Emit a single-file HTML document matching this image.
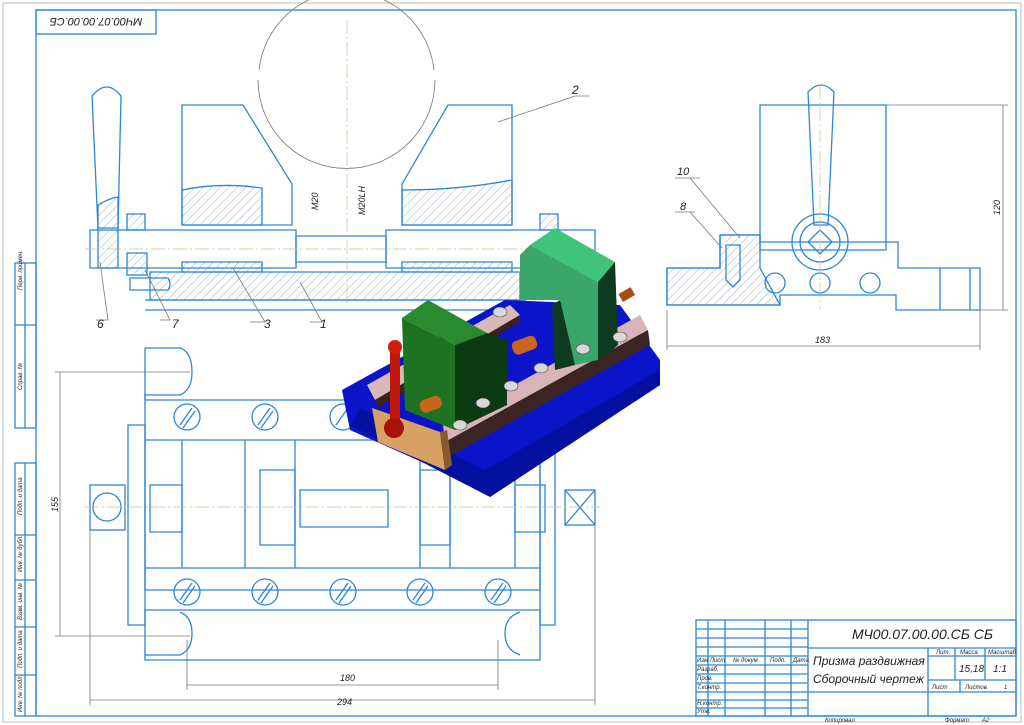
<!DOCTYPE html>
<html><head><meta charset="utf-8"><style>
html,body{margin:0;padding:0;background:#fff;}
svg{display:block;}
text{font-family:"Liberation Sans","DejaVu Sans",sans-serif;font-style:italic;fill:#222;}
</style></head><body>
<svg width="1024" height="725" viewBox="0 0 1024 725" xmlns="http://www.w3.org/2000/svg">
<defs>
<pattern id="h" width="6" height="6" patternUnits="userSpaceOnUse" patternTransform="rotate(45)">
<line x1="0" y1="0" x2="0" y2="6" stroke="#8a9bb0" stroke-width="0.8"/></pattern>
</defs>
<rect x="3" y="3" width="1018" height="719" fill="#fff" stroke="#bbb"/>
<g fill="none" stroke="#2b86d6" stroke-width="1.3">
<rect x="36" y="10" width="980" height="706"/>
<rect x="36" y="10" width="120" height="24"/>
<rect x="15" y="263" width="21" height="165"/><line x1="15" y1="325" x2="36" y2="325"/><line x1="25" y1="263" x2="25" y2="428"/>
<rect x="15" y="463" width="21" height="253"/><line x1="25" y1="463" x2="25" y2="716"/>
<line x1="15" y1="535" x2="36" y2="535"/><line x1="15" y1="580" x2="36" y2="580"/><line x1="15" y1="627" x2="36" y2="627"/><line x1="15" y1="675" x2="36" y2="675"/>
<rect x="696" y="620" width="320" height="96"/>
<line x1="808" y1="620" x2="808" y2="716"/><line x1="808" y1="648" x2="1016" y2="648"/>
<line x1="808" y1="692" x2="1016" y2="692"/><line x1="928" y1="648" x2="928" y2="716"/>
<line x1="928" y1="656" x2="1016" y2="656"/><line x1="928" y1="680" x2="1016" y2="680"/>
<line x1="955" y1="648" x2="955" y2="680"/><line x1="985" y1="648" x2="985" y2="680"/>
<line x1="960" y1="680" x2="960" y2="692"/>
<line x1="708" y1="620" x2="708" y2="716"/><line x1="725" y1="620" x2="725" y2="716"/>
<line x1="765" y1="620" x2="765" y2="716"/><line x1="791" y1="620" x2="791" y2="716"/>
<line x1="696" y1="629" x2="808" y2="629"/><line x1="696" y1="638" x2="808" y2="638"/><line x1="696" y1="647" x2="808" y2="647"/>
<line x1="696" y1="656" x2="808" y2="656"/><line x1="696" y1="665" x2="808" y2="665"/><line x1="696" y1="674" x2="808" y2="674"/>
<line x1="696" y1="683" x2="808" y2="683"/><line x1="696" y1="692" x2="808" y2="692"/><line x1="696" y1="700" x2="808" y2="700"/><line x1="696" y1="708" x2="808" y2="708"/>

<path d="M182 105 H243 L292 184 V225 H182 Z" />
<path d="M512 105 H448 L402 184 V225 H512 Z" />
<path d="M182 190 Q220 182 262 188 V225 H182 Z" fill="url(#h)"/>
<path d="M402 190 Q460 190 512 180 V225 H402 Z" fill="url(#h)"/>
<path d="M90 230 H296 V268 H90 Z"/>
<path d="M386 230 H595 V268 H386 Z"/>
<path d="M296 236 H386 V262 H296Z"/>
<path d="M150 272 H520 V300 H150Z" fill="url(#h)"/>
<path d="M145 300 H525 V310 H145"/>
<path d="M182 262 H262 V272 H182Z" fill="url(#h)"/>
<path d="M402 262 H512 V272 H402Z" fill="url(#h)"/>
<path d="M92 96 Q107 78 121 96 L118 228 H98 Z"/>
<path d="M98 205 Q110 198 118 197 V268 H98Z" fill="url(#h)"/>
<rect x="127" y="253" width="20" height="22" fill="url(#h)"/><rect x="127" y="214" width="18" height="16" fill="url(#h)"/>
<rect x="540" y="214" width="18" height="16" fill="url(#h)"/>
<path d="M130 278 H168 Q172 284 168 290 H130 Z"/>
<path d="M760 105 H886 V250 H760 Z"/>
<path d="M667 268 H720 V235 H760 V242 H898 V268 H940 V310 H896 V295 H780 V305 H667 Z"/>
<path d="M667 268 H720 V235 H760 V268 L780 305 H667Z" fill="url(#h)"/>
<circle cx="820" cy="242" r="28"/><circle cx="820" cy="242" r="20"/>
<path d="M820 230 L832 242 L820 254 L808 242Z"/>
<path d="M808 92 Q821 78 834 92 L828 225 H814 Z"/>
<circle cx="820" cy="283" r="10"/><circle cx="870" cy="283" r="10"/><circle cx="775" cy="283" r="10"/>
<path d="M940 268 H980 V310 H940"/><line x1="970" y1="268" x2="970" y2="310"/>
<path d="M726 245 H740 V280 L733 287 L726 280Z"/>
<path d="M145 348 H180 Q192 352 192 372 Q192 390 180 395 H145 V590 H540 V395 H520 Q505 385 505 372 Q505 350 520 348 H540"/>
<path d="M145 400 H540 M145 440 H540 M145 568 H540 M145 610 H540"/>
<path d="M145 610 V660 H540 V610 M145 655 H180 Q192 650 192 633 Q192 617 180 612 M520 612 Q505 617 505 633 Q505 650 520 655"/>
<path d="M145 348 V400 M540 348 V400"/>
<path d="M128 425 H145 V625 H128Z M555 425 H540 V625 H555Z"/>
<path d="M182 440 V568 M245 440 V568 M295 440 V568 M420 440 V568 M450 440 V568 M515 440 V568"/>
<path d="M260 470 H295 V545 H260Z M420 470 H450 V545 H420Z"/>
<path d="M150 485 H182 V532 H150Z M300 490 H388 V527 H300Z M515 485 H545 V532 H515Z"/>
<rect x="90" y="485" width="35" height="45"/><circle cx="107" cy="507" r="14"/>
<rect x="565" y="490" width="30" height="35"/><path d="M565 490 L595 525 M595 490 L565 525"/>
<g>
<circle cx="187" cy="417" r="13"/><circle cx="265" cy="417" r="13"/><circle cx="343" cy="417" r="13"/>
<circle cx="187" cy="592" r="13"/><circle cx="265" cy="592" r="13"/><circle cx="343" cy="592" r="13"/><circle cx="420" cy="592" r="13"/><circle cx="498" cy="592" r="13"/>
<path d="M180 425 L192 408 M183 428 L195 411 M258 425 L270 408 M261 428 L273 411 M336 425 L348 408 M180 600 L192 583 M183 603 L195 586 M258 600 L270 583 M261 603 L273 586 M336 600 L348 583 M339 603 L351 586 M413 600 L425 583 M416 603 L428 586 M491 600 L503 583 M494 603 L506 586"/>
</g>
</g>
<g fill="none" stroke="#777" stroke-width="0.8">
<path d="M258 80 A88 88 0 0 0 435 80" />
<path d="M259 70 A88 88 0 0 1 434 70"/>
<line x1="60" y1="372" x2="60" y2="636"/><line x1="55" y1="372" x2="190" y2="372"/><line x1="55" y1="636" x2="190" y2="636"/>
<line x1="187" y1="685" x2="498" y2="685"/><line x1="90" y1="700" x2="595" y2="700"/>
<line x1="187" y1="640" x2="187" y2="690"/><line x1="498" y1="640" x2="498" y2="690"/>
<line x1="90" y1="530" x2="90" y2="705"/><line x1="595" y1="525" x2="595" y2="705"/>
<line x1="667" y1="346" x2="980" y2="346"/><line x1="667" y1="310" x2="667" y2="350"/><line x1="980" y1="310" x2="980" y2="350"/>
<line x1="1003" y1="105" x2="1003" y2="310"/><line x1="886" y1="105" x2="1008" y2="105"/><line x1="940" y1="310" x2="1008" y2="310"/>
<path d="M498 122 L575 96 H590"/><path d="M100 262 L108 320 H96"/><path d="M145 270 L170 320 H160"/>
<path d="M233 268 L265 322 H250"/><path d="M300 282 L322 322 H310"/>
<path d="M690 178 L740 238 M675 178 H700"/><path d="M690 212 L722 248 M675 212 H695"/>
</g>
<g stroke="#d8b888" stroke-width="0.7" stroke-dasharray="14 3 2 3">
<line x1="347" y1="20" x2="347" y2="305"/><line x1="85" y1="249" x2="600" y2="249"/>
<line x1="85" y1="507" x2="600" y2="507"/><line x1="820" y1="85" x2="820" y2="310"/>
</g>
<text x="96" y="26" font-size="11" transform="rotate(180 96 22)" text-anchor="middle">МЧ00.07.00.00.СБ</text>
<text x="572" y="94" font-size="12">2</text>
<text x="97" y="328" font-size="12">6</text><text x="172" y="328" font-size="12">7</text>
<text x="264" y="328" font-size="12">3</text><text x="320" y="328" font-size="12">1</text>
<text x="677" y="175" font-size="11">10</text><text x="680" y="210" font-size="11">8</text>
<text x="318" y="210" font-size="9" transform="rotate(-90 318 210)">М20</text>
<text x="365" y="215" font-size="9" transform="rotate(-90 365 215)">М20LH</text>
<text x="340" y="681" font-size="9">180</text><text x="337" y="705" font-size="9">294</text>
<text x="58" y="512" font-size="9" transform="rotate(-90 58 512)">155</text>
<text x="815" y="343" font-size="9">183</text>
<text x="1000" y="215" font-size="9" transform="rotate(-90 1000 215)">120</text>
<g font-size="6">
<text x="22" y="290" transform="rotate(-90 22 290)">Перв. примен.</text>
<text x="22" y="390" transform="rotate(-90 22 390)">Справ. №</text>
<text x="22" y="515" transform="rotate(-90 22 515)">Подп. и дата</text>
<text x="22" y="572" transform="rotate(-90 22 572)">Инв. № дубл.</text>
<text x="22" y="620" transform="rotate(-90 22 620)">Взам. инв. №</text>
<text x="22" y="668" transform="rotate(-90 22 668)">Подп. и дата</text>
<text x="22" y="712" transform="rotate(-90 22 712)">Инв. № подл.</text>
<text x="697" y="662">Изм Лист</text><text x="733" y="662">№ докум.</text><text x="770" y="662">Подп.</text><text x="793" y="662">Дата</text>
<text x="697" y="671">Разраб.</text><text x="697" y="680">Пров.</text><text x="697" y="689">Т.контр.</text>
<text x="697" y="705">Н.контр.</text><text x="697" y="713">Утв.</text>
<text x="936" y="654">Лит.</text><text x="960" y="654">Масса</text><text x="988" y="654">Масштаб</text>
<text x="932" y="689">Лист</text><text x="965" y="689">Листов</text><text x="1004" y="689">1</text>
<text x="825" y="722">Копировал</text><text x="945" y="722">Формат</text><text x="982" y="722">А2</text>
</g>
<text x="852" y="639" font-size="14">МЧ00.07.00.00.СБ СБ</text>
<text x="813" y="665" font-size="12">Призма раздвижная</text>
<text x="813" y="683" font-size="12">Сборочный чертеж</text>
<text x="959" y="672" font-size="10">15,18</text><text x="993" y="672" font-size="10">1:1</text>

<polygon points="342,390 505,300 620,305 660,360 660,385 490,497 478,487 350,430" fill="#0a14c8"/>
<polygon points="350,425 490,497 660,385 660,370 485,470 360,408" fill="#0510a0"/>
<polygon points="367,385 510,305 520,315 375,400" fill="#d9b8b8"/>
<polygon points="375,400 520,315 520,322 378,408" fill="#3a2020"/>
<polygon points="443,425 640,315 648,330 445,442" fill="#d8b4b8"/>
<polygon points="445,442 648,330 650,345 447,458" fill="#3b2424"/>
<polygon points="372,408 440,432 445,470 378,442" fill="#d9a064"/>
<polygon points="440,432 447,430 452,465 445,470" fill="#8a5a2a"/>
<polygon points="402,318 428,300 487,333 455,345" fill="#2a8a2f"/>
<polygon points="402,318 455,345 455,430 405,410" fill="#1d7322"/>
<polygon points="455,345 487,333 507,340 507,405 455,430" fill="#0c3a12"/>
<polygon points="530,245 555,228 615,262 598,282" fill="#40c47c"/>
<polygon points="520,255 530,245 598,282 598,360 575,365 560,300 540,300 520,300" fill="#3aa66a"/>
<polygon points="598,282 615,262 618,345 598,362" fill="#0d3b1e"/>
<polygon points="560,300 575,365 555,370 552,305" fill="#0d3b1e"/>
<rect x="512" y="338" width="25" height="14" rx="5" fill="#c9651e" transform="rotate(-20 525 345)"/>
<rect x="420" y="398" width="22" height="13" rx="5" fill="#c9651e" transform="rotate(-20 430 405)"/>
<rect x="620" y="290" width="14" height="9" fill="#a64c14" transform="rotate(-30 627 295)"/>
<rect x="390" y="345" width="10" height="85" rx="4" fill="#c0170c"/>
<circle cx="395" cy="347" r="7" fill="#d11e10"/>
<circle cx="394" cy="428" r="10" fill="#a8120a"/>
<g fill="#d8d8d8" stroke="#444" stroke-width="0.6">
<ellipse cx="460" cy="425" rx="7" ry="5"/><ellipse cx="483" cy="403" rx="7" ry="5"/><ellipse cx="511" cy="386" rx="7" ry="5"/>
<ellipse cx="541" cy="368" rx="7" ry="5"/><ellipse cx="583" cy="349" rx="7" ry="5"/><ellipse cx="620" cy="337" rx="7" ry="5"/>
<ellipse cx="500" cy="312" rx="7" ry="5"/>
</g>
</svg>
</body></html>
